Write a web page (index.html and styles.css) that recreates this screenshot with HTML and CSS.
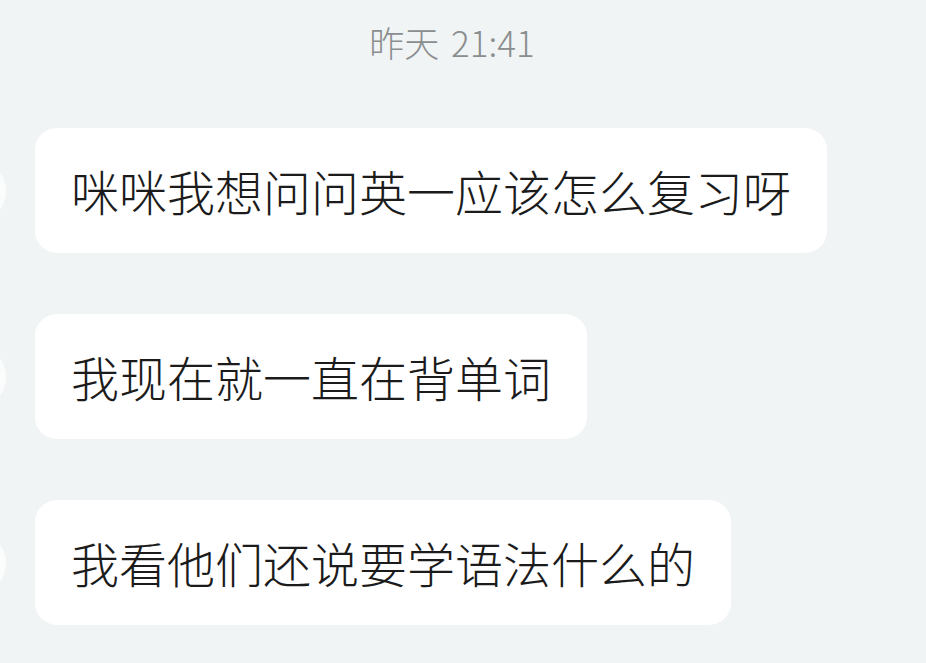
FILE: index.html
```html
<!DOCTYPE html>
<html lang="zh-CN">
<head>
    <meta charset="UTF-8">
    <meta name="viewport" content="width=device-width, initial-scale=1.0">
    <title>聊天</title>
    <link rel="stylesheet" href="styles.css">
</head>
<body>

    <div class="chat">
        <!-- 时间 -->
        <div class="time">昨天 21:41</div>

        <!-- 消息 -->
        <div class="msg">
            <div class="avatar"></div>
            <div class="bubble">咪咪我想问问英一应该怎么复习呀</div>
        </div>
        <div class="msg">
            <div class="avatar"></div>
            <div class="bubble">我现在就一直在背单词</div>
        </div>
        <div class="msg">
            <div class="avatar"></div>
            <div class="bubble">我看他们还说要学语法什么的</div>
        </div>
    </div>

</body>
</html>
```

FILE: styles.css
```css
body {
    margin: 0;
    background: #f1f4f5;
    font-family: "Noto Sans CJK SC", "Noto Sans", sans-serif;
    overflow: hidden;
}
.chat {
    padding-top: 20px;
    display: flex;
    flex-direction: column;
    gap: 61px;
}
.time {
    text-align: center;
    font-size: 35px;
    font-weight: 300;
    line-height: 44px;
    color: #8b8e8f;
    margin-bottom: 3px;
    padding-right: 22px;
    word-spacing: 4px;
}
.msg {
    display: flex;
    align-items: center;
}
.avatar {
    width: 64px;
    height: 64px;
    border-radius: 50%;
    background: #fbfcfc;
    margin-left: -58px;
    margin-right: 29px;
    flex-shrink: 0;
}
.bubble {
    background: #ffffff;
    color: #1b1b1b;
    font-size: 48px;
    font-weight: 300;
    line-height: 63px;
    padding: 31px 36px;
    border-radius: 22px;
}
```
